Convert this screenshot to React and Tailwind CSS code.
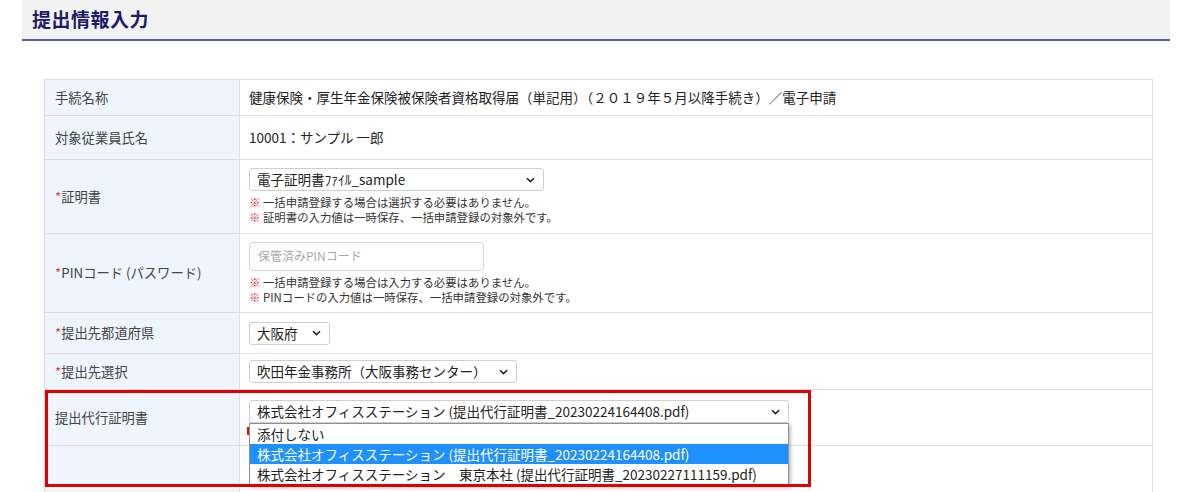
import React from 'react';

const FONT = { fontFamily: '"Noto Sans CJK JP", "Noto Sans", sans-serif' };

const Chevron = () => (
  <svg width="9" height="6" viewBox="0 0 9 6" fill="none" className="shrink-0">
    <path d="M1 1.2 L4.5 4.6 L8 1.2" stroke="#222" strokeWidth="1.6" />
  </svg>
);

const Select = ({ value, width }) => (
  <div className={`flex items-center justify-between h-[23px] pl-[7px] pr-[8px] border border-[#cfcfcf] rounded-[3px] bg-white text-[13.5px] text-[#222] ${width}`}>
    <span className="whitespace-nowrap">{value}</span>
    <Chevron />
  </div>
);

const Note = ({ children }) => (
  <div className="text-[11.4px] leading-[15px] text-[#333] whitespace-nowrap">
    <span className="text-[#ee1111]">※</span> {children}
  </div>
);

const Req = () => <span className="text-[#e53935]">*</span>;

const Row = ({ label, height, children }) => (
  <div className={`flex border-b border-[#dedede] ${height}`}>
    <div className="w-[195px] shrink-0 bg-[#eef5fc] border-r border-[#dedede] flex items-center pl-[10px] text-[13.3px] text-[#444]">
      {label}
    </div>
    <div className="flex-1 flex flex-col justify-center pl-[9px] text-[13px] text-[#222]">
      {children}
    </div>
  </div>
);

const App = () => {
  return (
    <div className="w-[1187px] h-[492px] overflow-hidden bg-white" style={FONT}>
      {/* page header */}
      <div className="ml-[22px] w-[1148px] h-[41px] bg-[#f2f2f2] border-b-2 border-[#5b5ca8] flex items-center pl-[10px]">
        <h1 className="text-[19px] font-bold text-[#1b1b6b] tracking-[0.5px]">提出情報入力</h1>
      </div>

      {/* form table */}
      <div className="relative ml-[44px] mt-[38px] w-[1109px] border-t border-x border-[#dedede]">
        <Row label="手続名称" height="h-[36px]">
          <div className="text-[13.5px] whitespace-nowrap">
            健康保険・厚生年金保険被保険者資格取得届（単記用）（２０１９年５月以降手続き）／電子申請
          </div>
        </Row>
        <Row label="対象従業員氏名" height="h-[44px]">
          <div className="text-[13.5px]">10001：サンプル 一郎</div>
        </Row>
        <Row label={<span><Req />証明書</span>} height="h-[74px]">
          <Select value="電子証明書ﾌｧｲﾙ_sample" width="w-[295px]" />
          <div className="mt-[4px]">
            <Note>一括申請登録する場合は選択する必要はありません。</Note>
            <Note>証明書の入力値は一時保存、一括申請登録の対象外です。</Note>
          </div>
        </Row>
        <Row label={<span><Req />PINコード (パスワード)</span>} height="h-[79px]">
          <div className="w-[235px] h-[29px] border border-[#d4d4d4] rounded-[4px] flex items-center pl-[8px] text-[12px] text-[#aaa]">
            保管済みPINコード
          </div>
          <div className="mt-[4px]">
            <Note>一括申請登録する場合は入力する必要はありません。</Note>
            <Note>PINコードの入力値は一時保存、一括申請登録の対象外です。</Note>
          </div>
        </Row>
        <Row label={<span><Req />提出先都道府県</span>} height="h-[41px]">
          <Select value="大阪府" width="w-[81px]" />
        </Row>
        <Row label={<span><Req />提出先選択</span>} height="h-[36px]">
          <Select value="吹田年金事務所（大阪事務センター）" width="w-[268px]" />
        </Row>
        <Row label="提出代行証明書" height="h-[56px]">
          <div className="relative">
            <Select value="株式会社オフィスステーション (提出代行証明書_20230224164408.pdf)" width="w-[540px]" />
            {/* hint peeking out from behind the open list */}
            <div className="mt-[4px] ml-[-2px] w-[3px] h-[8px] bg-[#ee1111]" />
            {/* open dropdown list */}
            <div className="absolute left-0 top-[23px] w-[540px] bg-white border border-[#8f8f8f] shadow-[2px_2px_3px_rgba(0,0,0,0.25)] z-10 text-[13.5px] text-[#222]">
              <div className="h-[20px] leading-[20px] pl-[7px]">添付しない</div>
              <div className="h-[20px] leading-[20px] pl-[7px] bg-[#1e90ff] text-white whitespace-nowrap">
                株式会社オフィスステーション (提出代行証明書_20230224164408.pdf)
              </div>
              <div className="h-[21px] leading-[20px] pl-[7px] whitespace-nowrap">
                株式会社オフィスステーション　東京本社 (提出代行証明書_20230227111159.pdf)
              </div>
            </div>
          </div>
        </Row>
        <Row label="" height="h-[60px]">
          <div className="mt-[36px] w-[520px] h-[4px] bg-[repeating-linear-gradient(90deg,#bbb_0px,#bbb_5px,transparent_5px,transparent_7px)]" />
        </Row>

        {/* highlight frame */}
        <div className="absolute left-0 top-[310px] w-[766px] h-[97px] border-[3px] border-[#e00000] z-20 pointer-events-none" />
      </div>
    </div>
  );
};

export default App;
